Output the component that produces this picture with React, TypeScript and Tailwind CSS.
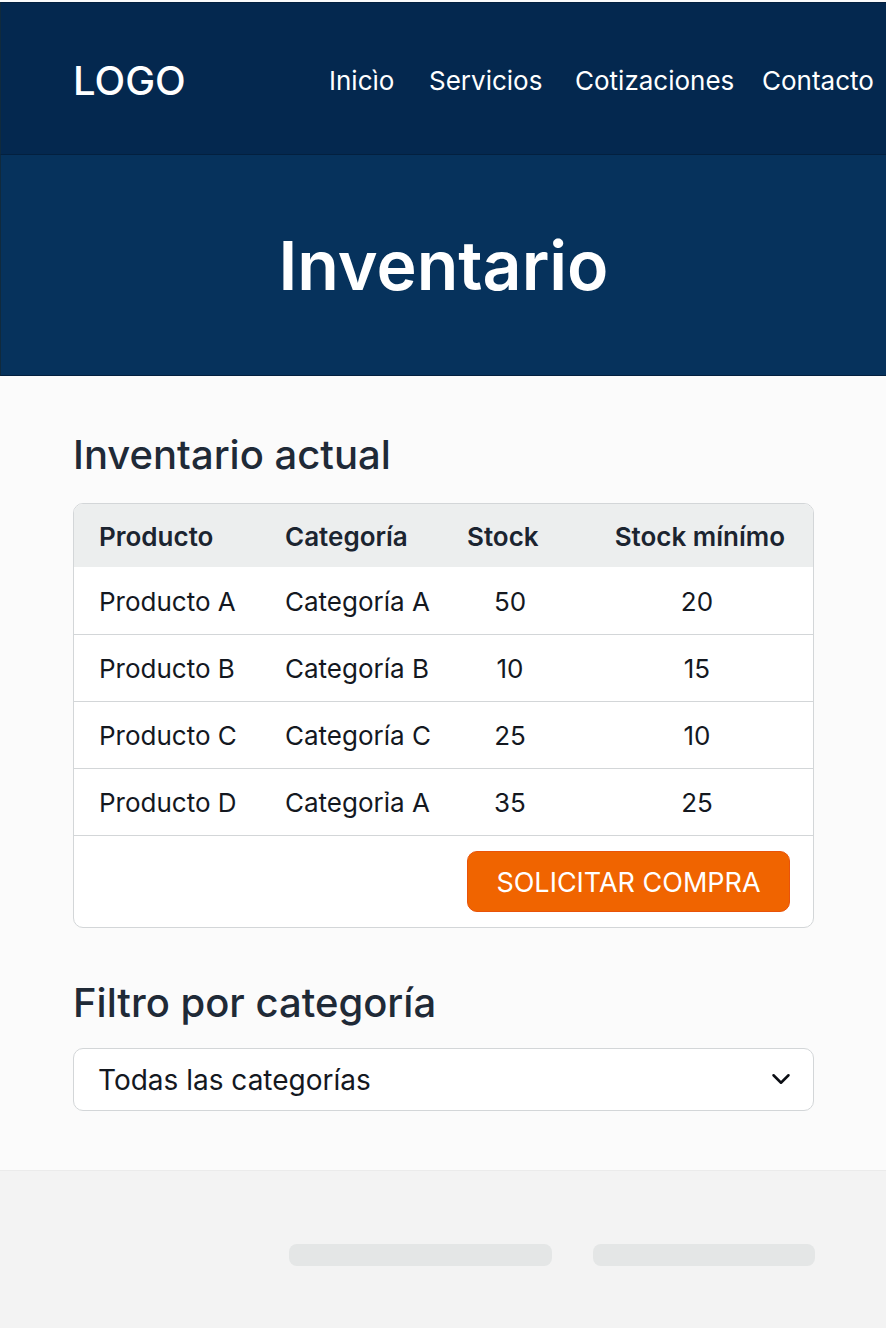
import { ChevronDown } from "lucide-react";

const links = [
  { label: "Inicìo", width: "w-[100px]" },
  { label: "Servicios", width: "w-[146px]" },
  { label: "Cotizaciones", width: "w-[187px]" },
  { label: "Contacto", width: "w-[124px]" },
];

const rows = [
  ["Producto A", "Categoría A", 50, 20],
  ["Producto B", "Categoría B", 10, 15],
  ["Producto C", "Categoría C", 25, 10],
  ["Producto D", "Categorỉa A", 35, 25],
];

export default function App() {
  return (
    <div className="flex min-h-screen flex-col bg-[#fbfbfb] font-['Inter',sans-serif] text-[#1f2a37]">
      <header className="mt-0.5 flex h-[153px] items-center justify-between border-y border-l border-y-[#03203f] border-l-[#102a3d] bg-[#04284f] pt-1 pl-[72px] text-white">
        <a href="#" className="text-[40px] font-medium">LOGO</a>
        <nav className="flex text-[26px]">
          {links.map((l) => (
            <a key={l.label} href="#" className={l.width}>{l.label}</a>
          ))}
        </nav>
      </header>
      <section className="flex h-[221px] items-center justify-center border-b border-l border-b-[#03203f] border-l-[#102a3d] bg-[#06325c] text-white">
        <h1 className="text-[68px] font-semibold">Inventario</h1>
      </section>
      <main className="flex-1 pt-[54px] pr-[72px] pl-[73px]">
        <h2 className="text-[40px] leading-[50px] font-medium">Inventario actual</h2>
        <div className="mt-[23px] overflow-hidden rounded-[10px] border border-[#d3d6d8] bg-white">
          <table className="w-full table-fixed text-[26px] text-[#14181f]">
            <thead className="bg-[#eceeee] text-left text-[#1b2430]">
              <tr className="h-[63px]">
                <th className="w-[211px] pt-0.5 pl-[25px] font-semibold">Producto</th>
                <th className="w-[182px] pt-0.5 font-semibold">Categoría</th>
                <th className="w-[86px] pt-0.5 font-semibold">Stock</th>
                <th className="pt-0.5 pr-7 text-right font-semibold">Stock mínímo</th>
              </tr>
            </thead>
            <tbody>
              {rows.map((r) => (
                <tr key={r[0]} className="h-[67px] border-b border-[#d3d6d8]">
                  <td className="pt-0.5 pl-[25px]">{r[0]}</td>
                  <td className="pt-0.5">{r[1]}</td>
                  <td className="pt-0.5 text-center">{r[2]}</td>
                  <td className="pt-0.5 pl-7 text-center">{r[3]}</td>
                </tr>
              ))}
            </tbody>
          </table>
          <div className="flex h-[91px] items-center justify-end pr-[23px]">
            <button type="button" className="h-[61px] w-[323px] rounded-[10px] border border-[#e9530a] bg-[#f06400] pt-1 text-[27px] text-white">SOLICITAR COMPRA</button>
          </div>
        </div>
        <label htmlFor="category" className="mt-[50px] block text-[40px] leading-[50px] font-medium">Filtro por categoría</label>
        <div className="mt-5 grid items-center">
          <select id="category" className="col-start-1 row-start-1 h-[63px] w-full appearance-none rounded-[10px] border border-[#d3d6d8] bg-white px-6 pt-0.5 text-[28px] text-[#14181f]">
            <option>Todas las categorías</option>
          </select>
          <ChevronDown className="pointer-events-none col-start-1 row-start-1 mr-[18px] size-[30px] justify-self-end text-[#0b0e14]" />
        </div>
      </main>
      <footer className="flex h-[158px] items-center justify-end gap-[41px] border-t border-[#ebebeb] bg-[#f3f3f3] pt-2.5 pr-[71px]">
        <div className="h-[22px] w-[263px] rounded-lg bg-[#e4e6e6]" />
        <div className="h-[22px] w-[222px] rounded-lg bg-[#e4e6e6]" />
      </footer>
    </div>
  );
}
